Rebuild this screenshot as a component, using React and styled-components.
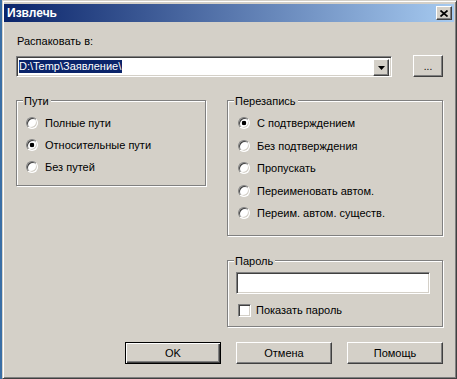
import React, { useState } from "react";
import styled, { createGlobalStyle, css } from "styled-components";

const GlobalStyle = createGlobalStyle`
  html, body {
    margin: 0;
    padding: 0;
    background: #3a6ea5;
  }
  body {
    font-family: "Liberation Sans", Arial, sans-serif;
    font-size: 11px;
    color: #000;
  }
`;

// classic 3D edges
const raised = css`
  border: 1px solid;
  border-color: #fff #404040 #404040 #fff;
  box-shadow: inset -1px -1px #808080, inset 1px 1px #d4d0c8;
  background: #d4d0c8;
`;

const sunken = css`
  border: 1px solid;
  border-color: #808080 #fff #fff #808080;
  box-shadow: inset 1px 1px #404040, inset -1px -1px #d4d0c8;
  background: #fff;
`;

const Window = styled.div`
  box-sizing: border-box;
  width: 455px;
  height: 379px;
  margin-left: 2px;
  background: #d4d0c8;
  border: 1px solid;
  border-color: #d4d0c8 #404040 #404040 #d4d0c8;
  box-shadow: inset 1px 1px #fff, inset -1px -1px #808080;
  padding: 3px 2px 2px 1px;
  display: flex;
  flex-direction: column;
`;

const TitleBar = styled.div`
  height: 18px;
  display: flex;
  align-items: center;
  justify-content: space-between;
  padding: 0 2px;
  background: linear-gradient(to right, #0a246a, #a6caf0);
`;

const TitleText = styled.span`
  color: #fff;
  font-weight: bold;
  font-size: 12px;
  padding-left: 1px;
`;

const CloseButton = styled.div`
  ${raised};
  box-sizing: border-box;
  width: 16px;
  height: 14px;
  display: flex;
  align-items: center;
  justify-content: center;
`;

const Body = styled.div`
  display: flex;
  flex-direction: column;
  padding: 13px 11px 0 12px;
`;

const Label = styled.div`
  line-height: 13px;
  padding-left: 1px;
`;

const ComboRow = styled.div`
  display: flex;
  align-items: flex-end;
  gap: 21px;
  height: 22px;
  margin-top: 7px;
`;

const Combo = styled.div`
  ${sunken};
  box-sizing: border-box;
  width: 376px;
  height: 21px;
  display: flex;
  padding: 2px;
`;

const ComboText = styled.div`
  flex: 1;
  display: flex;
  align-items: center;
`;

const Selection = styled.span`
  background: #0a246a;
  color: #fff;
  line-height: 13px;
  padding: 0 1px 0 0;
`;

const DropButton = styled.div`
  ${raised};
  box-sizing: border-box;
  width: 16px;
  height: 17px;
  display: flex;
  align-items: center;
  justify-content: center;
`;

const SmallButton = styled.div`
  ${raised};
  box-sizing: border-box;
  width: 30px;
  height: 22px;
  display: flex;
  align-items: center;
  justify-content: center;
  font-size: 10px;
  padding-top: 1px;
`;

const GroupsRow = styled.div`
  display: flex;
  align-items: flex-start;
  gap: 21px;
  margin-top: 23px;
`;

const Column = styled.div`
  width: ${({ $w }) => $w}px;
  display: flex;
  flex-direction: column;
  gap: 24px;
`;

const Group = styled.div`
  position: relative;
  box-sizing: border-box;
  height: ${({ $h }) => $h}px;
  border: 1px solid #808080;
  box-shadow: inset 1px 1px #fff, 1px 1px 0 #fff;
  padding: ${({ $pad }) => $pad};
  display: flex;
  flex-direction: column;
`;

const GroupLabel = styled.span`
  position: absolute;
  top: -6px;
  left: 6px;
  padding: 0 2px 0 1px;
  line-height: 13px;
  background: #d4d0c8;
`;

const OptionRow = styled.label`
  display: flex;
  align-items: center;
  gap: 7px;
  height: ${({ $h }) => $h}px;
  cursor: default;
`;

const Radio = styled.span`
  ${sunken};
  box-sizing: border-box;
  width: 12px;
  height: 12px;
  border-radius: 50%;
  flex-shrink: 0;
  ${({ $on }) =>
    $on &&
    css`
      background: radial-gradient(circle, #000 0 2px, #fff 2.6px);
    `}
`;

const PasswordField = styled.div`
  ${sunken};
  box-sizing: border-box;
  width: 194px;
  height: 22px;
`;

const CheckRow = styled.label`
  display: flex;
  align-items: center;
  gap: 5px;
  margin: 9px 0 0 2px;
  height: 14px;
`;

const CheckBox = styled.span`
  ${sunken};
  box-sizing: border-box;
  width: 13px;
  height: 13px;
`;

const ButtonRow = styled.div`
  display: flex;
  justify-content: flex-end;
  gap: 15px;
  margin-top: 15px;
`;

const Button = styled.div`
  box-sizing: border-box;
  width: 96px;
  height: 22px;
  display: flex;
  align-items: center;
  justify-content: center;
  background: #d4d0c8;
  ${({ $default }) =>
    $default
      ? css`
          border: 1px solid #000;
          box-shadow: inset 1px 1px #fff, inset -1px -1px #404040,
            inset -2px -2px #808080;
        `
      : raised}
`;

const pathOptions = ["Полные пути", "Относительные пути", "Без путей"];
const overwriteOptions = [
  "С подтверждением",
  "Без подтверждения",
  "Пропускать",
  "Переименовать автом.",
  "Переим. автом. существ.",
];

export default function App() {
  const [pathMode, setPathMode] = useState(1);
  const [overwrite, setOverwrite] = useState(0);

  return (
    <>
      <GlobalStyle />
      <Window>
        <TitleBar>
          <TitleText>Извлечь</TitleText>
          <CloseButton>
            <svg width="8" height="7" viewBox="0 0 8 7">
              <path d="M0.5 0.5L7.5 6.5M7.5 0.5L0.5 6.5" stroke="#000" strokeWidth="1.7" />
            </svg>
          </CloseButton>
        </TitleBar>
        <Body>
          <Label>Распаковать в:</Label>
          <ComboRow>
            <Combo>
              <ComboText>
                <Selection>D:\Temp\Заявление\</Selection>
              </ComboText>
              <DropButton>
                <svg width="7" height="4" viewBox="0 0 7 4">
                  <polygon points="0,0 7,0 3.5,4" fill="#000" />
                </svg>
              </DropButton>
            </Combo>
            <SmallButton>...</SmallButton>
          </ComboRow>

          <GroupsRow>
            <Column $w={190}>
              <Group $h={86} $pad="11px 0 0 9px">
                <GroupLabel>Пути</GroupLabel>
                {pathOptions.map((o, i) => (
                  <OptionRow key={o} $h={22} onClick={() => setPathMode(i)}>
                    <Radio $on={pathMode === i} />
                    {o}
                  </OptionRow>
                ))}
              </Group>
            </Column>
            <Column $w={216}>
              <Group $h={136} $pad="11px 0 0 10px">
                <GroupLabel>Перезапись</GroupLabel>
                {overwriteOptions.map((o, i) => (
                  <OptionRow key={o} $h={22.5} onClick={() => setOverwrite(i)}>
                    <Radio $on={overwrite === i} />
                    {o}
                  </OptionRow>
                ))}
              </Group>
              <Group $h={67} $pad="11px 0 0 8px">
                <GroupLabel>Пароль</GroupLabel>
                <PasswordField />
                <CheckRow>
                  <CheckBox />
                  Показать пароль
                </CheckRow>
              </Group>
            </Column>
          </GroupsRow>

          <ButtonRow>
            <Button $default>OK</Button>
            <Button>Отмена</Button>
            <Button>Помощь</Button>
          </ButtonRow>
        </Body>
      </Window>
    </>
  );
}
